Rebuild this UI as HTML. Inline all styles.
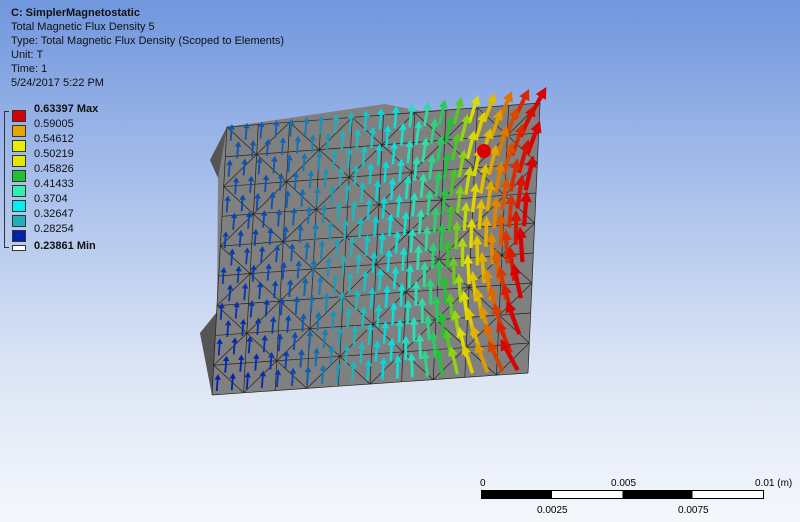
<!DOCTYPE html>
<html><head><meta charset="utf-8"><style>
html,body{margin:0;padding:0}
body{width:800px;height:522px;overflow:hidden;position:relative;font-family:"Liberation Sans",sans-serif;
background:linear-gradient(180deg,#7096dd 0%,#a8bfeb 35%,#dbe4f5 70%,#f5f7fc 100%)}
.t{position:absolute;left:11px;font-size:11px;color:#111;line-height:13px}
.lg{position:absolute;left:12px;width:14px;height:12px;border:1px solid #333;box-sizing:border-box}
.lv{position:absolute;left:34px;font-size:11px;color:#111}
svg{position:absolute;left:0;top:0}
</style></head><body>
<div class="t" style="top:7px;font-weight:bold">C: SimplerMagnetostatic</div>
<div class="t" style="top:21px">Total Magnetic Flux Density 5</div>
<div class="t" style="top:35px">Type: Total Magnetic Flux Density (Scoped to Elements)</div>
<div class="t" style="top:49px">Unit: T</div>
<div class="t" style="top:63px">Time: 1</div>
<div class="t" style="top:77px">5/24/2017 5:22 PM</div>
<div style="position:absolute;left:4px;top:111px;width:4px;height:135px;border:1px solid #333;border-right:none"></div>
<div class="lg" style="top:110px;background:#d80000"></div>
<div class="lg" style="top:125px;background:#e0a800"></div>
<div class="lg" style="top:140px;background:#e8f000"></div>
<div class="lg" style="top:155px;background:#e0e800"></div>
<div class="lg" style="top:170px;background:#20c030"></div>
<div class="lg" style="top:185px;background:#30f0b0"></div>
<div class="lg" style="top:200px;background:#00f0f0"></div>
<div class="lg" style="top:215px;background:#20b0b8"></div>
<div class="lg" style="top:230px;background:#0020b0"></div>
<div class="lg" style="top:245px;height:6px;background:#fff"></div>
<div class="lv" style="top:103px;font-weight:bold">0.63397 Max</div>
<div class="lv" style="top:118px">0.59005</div>
<div class="lv" style="top:133px">0.54612</div>
<div class="lv" style="top:148px">0.50219</div>
<div class="lv" style="top:163px">0.45826</div>
<div class="lv" style="top:178px">0.41433</div>
<div class="lv" style="top:193px">0.3704</div>
<div class="lv" style="top:208px">0.32647</div>
<div class="lv" style="top:223px">0.28254</div>
<div class="lv" style="top:240px;font-weight:bold">0.23861 Min</div>
<svg id="s" width="800" height="522"></svg>
<div style="position:absolute;left:480px;top:478px;font-size:10px">0</div>
<div style="position:absolute;left:611px;top:478px;font-size:10px">0.005</div>
<div style="position:absolute;left:755px;top:478px;font-size:10px">0.01 (m)</div>
<div style="position:absolute;left:537px;top:505px;font-size:10px">0.0025</div>
<div style="position:absolute;left:678px;top:505px;font-size:10px">0.0075</div>
<div style="position:absolute;left:481px;top:490px;width:283px;height:9px;border:1px solid #000;box-sizing:border-box;background:linear-gradient(90deg,#000 0 25%,#fff 25% 50%,#000 50% 75%,#fff 75%)"></div>
<script>
var s=document.getElementById('s'),h='';
var TL=[227,127],TR=[540,103],BR=[528,373],BL=[212,395];
function P(u,v){return[(1-u)*(1-v)*TL[0]+u*(1-v)*TR[0]+u*v*BR[0]+(1-u)*v*BL[0],(1-u)*(1-v)*TL[1]+u*(1-v)*TR[1]+u*v*BR[1]+(1-u)*v*BL[1]];}
h+='<polygon points="227,127 385,104 420,111 540,103 528,373 212,395 200,333 217,312 218,178 210,160" fill="#808080"/>';
h+='<polygon points="227,127 218,178 210,160" fill="#555"/><polygon points="217,312 212,395 200,333" fill="#555"/>';
var C=10,R=9,i,j,a,b,c,d;
for(j=0;j<=R;j++)for(i=0;i<=C;i++){a=P(i/C,j/R);
if(i<C){b=P((i+1)/C,j/R);h+='<line x1="'+a[0]+'" y1="'+a[1]+'" x2="'+b[0]+'" y2="'+b[1]+'" stroke="#222" stroke-width=".7"/>';}
if(j<R){b=P(i/C,(j+1)/R);h+='<line x1="'+a[0]+'" y1="'+a[1]+'" x2="'+b[0]+'" y2="'+b[1]+'" stroke="#222" stroke-width=".7"/>';}
if(i<C&&j<R){c=P((i+1)/C,(j+1)/R);d=(i+j)%2?[P((i+1)/C,j/R),P(i/C,(j+1)/R)]:[a,c];h+='<line x1="'+d[0][0]+'" y1="'+d[0][1]+'" x2="'+d[1][0]+'" y2="'+d[1][1]+'" stroke="#222" stroke-width=".7"/>';}}
var cols=[[0,32,176],[32,176,184],[0,224,224],[48,224,176],[32,192,48],[224,224,0],[224,168,0],[216,64,0],[216,0,0]];
function col(t){t=Math.max(0,Math.min(1,t))*8;var k=Math.min(7,Math.floor(t)),f=t-k,A=cols[k],B=cols[k+1];return'rgb('+[0,1,2].map(function(q){return Math.round(A[q]+(B[q]-A[q])*f)}).join(',')+')';}
var NC=21,NR=15;
for(j=0;j<NR;j++)for(i=0;i<NC;i++){var u=(i+0.3+(j%2)*0.5)/NC,v=(j+.8)/NR;if(u>0.99)continue;a=P(u,v);
var t=Math.pow(u,2.5)*1.08+0.05*(1-v);var L=17+20*u*u;var w=1.8+2.6*u*u;
var ang=(u>0.55?(u-0.55)*(0.45-v)*2.6:0)+0.08;
var dx=Math.sin(ang)*L,dy=-Math.cos(ang)*L;var x2=a[0]+dx,y2=a[1]+dy,cl=col(t);
var hx=x2-dx*0.32,hy=y2-dy*0.32,nx=-dy/L*(w*1.1+1.2),ny=dx/L*(w*1.1+1.2);
h+='<line x1="'+a[0]+'" y1="'+a[1]+'" x2="'+hx+'" y2="'+hy+'" stroke="'+cl+'" stroke-width="'+w+'"/>';
h+='<polygon points="'+x2+','+y2+' '+(hx+nx)+','+(hy+ny)+' '+(hx-nx)+','+(hy-ny)+'" fill="'+cl+'"/>';}
h+='<circle cx="484" cy="151" r="7" fill="#d00"/>';
s.innerHTML=h;
</script>
</body></html>
